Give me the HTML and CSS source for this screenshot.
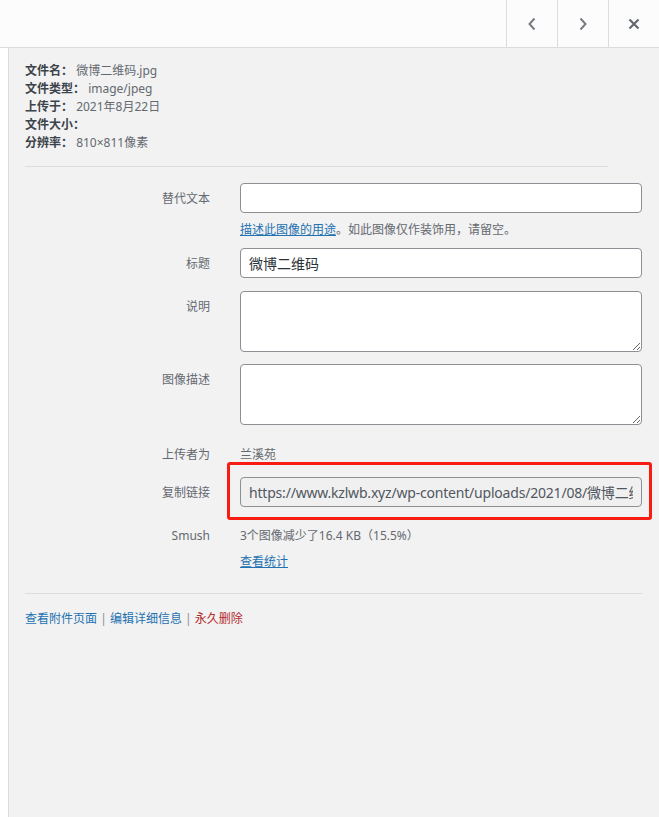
FILE: index.html
```html
<!DOCTYPE html>
<html lang="zh-CN">
  <head>
    <meta charset="utf-8">
    <title>附件详情</title>
    <link rel="stylesheet" href="styles.css">
  </head>
  <body>
    <header class="media-head">
      <button class="head-btn" aria-label="上一个">
        <svg width="10" height="14" viewBox="0 0 10 14"><polyline points="7.5,1.5 2.5,7 7.5,12.5" fill="none" stroke="#787c82" stroke-width="2"/></svg>
      </button>
      <button class="head-btn" aria-label="下一个">
        <svg width="10" height="14" viewBox="0 0 10 14"><polyline points="2.5,1.5 7.5,7 2.5,12.5" fill="none" stroke="#787c82" stroke-width="2"/></svg>
      </button>
      <button class="head-btn" aria-label="关闭">
        <svg width="12" height="12" viewBox="0 0 12 12"><path d="M1.5 1.5 L10.5 10.5 M10.5 1.5 L1.5 10.5" fill="none" stroke="#646970" stroke-width="2.2"/></svg>
      </button>
    </header>

    <div class="panel">
      <div class="file-info">
        <div><strong>文件名：</strong> 微博二维码.jpg</div>
        <div><strong>文件类型：</strong> image/jpeg</div>
        <div><strong>上传于：</strong> 2021年8月22日</div>
        <div><strong>文件大小：</strong></div>
        <div><strong>分辨率：</strong> 810×811像素</div>
      </div>
      <hr class="sep sep-short">

      <div class="settings">
        <div class="row row-alt">
          <label class="row-label">替代文本</label>
          <div class="row-field">
            <input class="text-input" type="text" value="">
            <p class="help"><a href="#">描述此图像的用途</a>。如此图像仅作装饰用，请留空。</p>
          </div>
        </div>
        <div class="row row-title">
          <label class="row-label">标题</label>
          <div class="row-field"><input class="text-input" type="text" value="微博二维码"></div>
        </div>
        <div class="row row-area">
          <label class="row-label">说明</label>
          <div class="row-field"><textarea class="text-area"></textarea></div>
        </div>
        <div class="row row-area">
          <label class="row-label">图像描述</label>
          <div class="row-field"><textarea class="text-area"></textarea></div>
        </div>
        <div class="row row-text row-uploader">
          <span class="row-label">上传者为</span>
          <div class="row-field">兰溪苑</div>
        </div>
        <div class="row row-link">
          <label class="row-label">复制链接</label>
          <div class="row-field">
            <input class="text-input readonly" type="text" readonly value="https://www.kzlwb.xyz/wp-content/uploads/2021/08/微博二维码.jpg">
            <span class="mark-box"></span>
          </div>
        </div>
        <div class="row row-text row-smush">
          <span class="row-label">Smush</span>
          <div class="row-field">
            <div>3个图像减少了16.4 KB（15.5%）</div>
            <a class="stats-link" href="#">查看统计</a>
          </div>
        </div>
      </div>

      <hr class="sep">
      <div class="actions">
        <a href="#">查看附件页面</a> <span class="pipe">|</span> <a href="#">编辑详细信息</a> <span class="pipe">|</span> <a class="delete" href="#">永久删除</a>
      </div>
    </div>
  </body>
</html>
```

FILE: styles.css
```css
html, body {
  height: 100%;
}
body {
  margin: 0;
  background: #fff;
  font-family: "Noto Sans", "Noto Sans CJK SC", sans-serif;
  font-size: 12px;
  line-height: 18px;
  color: #646970;
  display: flex;
  flex-direction: column;
}

.media-head {
  height: 47px;
  border-bottom: 1px solid #dcdcde;
  background: #fcfcfc;
  display: flex;
  justify-content: flex-end;
  flex-shrink: 0;
}
.head-btn {
  width: 51px;
  height: 47px;
  padding: 0;
  border: 0;
  border-left: 1px solid #dcdcde;
  background: transparent;
  display: flex;
  align-items: center;
  justify-content: center;
  cursor: pointer;
}

.panel {
  flex: 1;
  margin-left: 8px;
  border-left: 1px solid #dcdcde;
  background: #f2f2f2;
  padding: 14px 17px 0 16px;
}

.file-info strong {
  color: #3c434a;
  font-weight: 700;
}

.sep {
  border: 0;
  border-top: 1px solid #dcdcde;
  margin: 22px 0 0;
}
.sep-short {
  margin: 14px 34px 0 0;
}

.settings {
  padding-top: 16px;
}
.row {
  display: flex;
}
.row-label {
  width: 215px;
  flex-shrink: 0;
  padding-right: 30px;
  padding-top: 7px;
  text-align: right;
  box-sizing: border-box;
}
.row-field {
  flex: 1;
  position: relative;
}
.row-text .row-label {
  padding-top: 0;
}

.row-title {
  margin-top: 9px;
}
.row-area {
  margin-top: 13px;
}
.row-area + .row-area {
  margin-top: 12px;
}
.row-uploader {
  margin-top: 21px;
}
.row-link {
  margin-top: 13px;
}
.row-smush {
  margin-top: 20px;
}

.text-input,
.text-area {
  display: block;
  width: 100%;
  box-sizing: border-box;
  border: 1px solid #8c8f94;
  border-radius: 4px;
  background: #fff;
  color: #2c3338;
  font-family: "Noto Sans", "Noto Sans CJK SC", sans-serif;
  font-size: 14px;
  margin: 0;
}
.text-input {
  height: 30px;
  padding: 0 8px;
}
.text-area {
  height: 61px;
  padding: 4px 8px;
  resize: vertical;
}
.text-input.readonly {
  background: #f0f0f1;
  color: #50575e;
  letter-spacing: -0.2px;
}

.help {
  margin: 8px 0 0;
}
a {
  color: #2271b1;
}
.help a,
.stats-link {
  text-decoration: underline;
}
.stats-link {
  display: inline-block;
  margin-top: 8px;
}

.mark-box {
  position: absolute;
  left: -13px;
  right: -10px;
  top: -15px;
  bottom: -13px;
  border: 3px solid #f81c12;
  border-radius: 3px;
  pointer-events: none;
}

.actions {
  margin-top: 16px;
}
.actions a {
  text-decoration: none;
}
.actions .delete {
  color: #b32d2e;
}
.pipe {
  color: #8c8f94;
}
```
